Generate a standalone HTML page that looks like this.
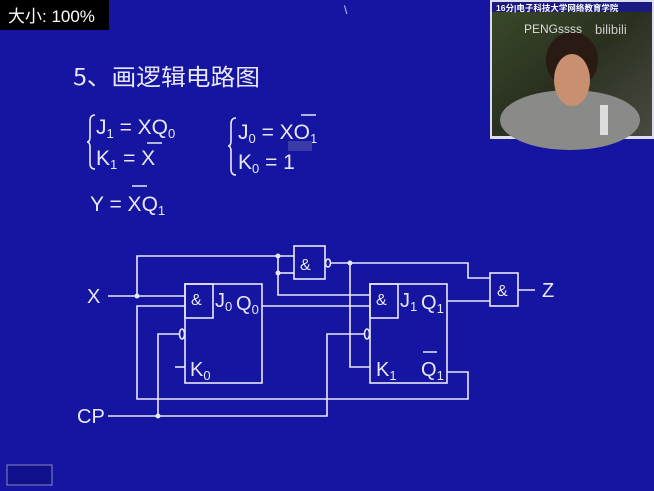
<!DOCTYPE html>
<html><head><meta charset="utf-8"><style>
html,body{margin:0;padding:0;width:654px;height:491px;overflow:hidden;background:#1414a0;}
svg{display:block}
</style></head><body>
<svg width="654" height="491" viewBox="0 0 654 491" xmlns="http://www.w3.org/2000/svg" font-family="Liberation Sans, Noto Sans CJK SC, sans-serif">
<rect width="654" height="491" fill="#1515a2"/>
<rect x="0" y="0" width="109" height="30" fill="#000"/>
<text x="8" y="22" font-size="17" fill="#fff">大小: 100%</text>
<text x="344" y="14" font-size="12" fill="#ccd">\</text>
<text x="73" y="85" font-size="23" fill="#e8e8f4" textLength="187" lengthAdjust="spacingAndGlyphs" font-family="Noto Sans CJK SC, sans-serif">5、画逻辑电路图</text>
<g fill="none" stroke="#e8e8f4" stroke-width="1.6">
<path d="M95,115 Q90,115 90,121 L90,137 Q90,142 87,142 Q90,142 90,147 L90,163 Q90,169 95,169"/>
<path d="M236,118 Q231,118 231,124 L231,141 Q231,146 228,146 Q231,146 231,151 L231,169 Q231,175 236,175"/>
</g>
<g fill="#e8e8f4" font-size="21">
<text x="96" y="134">J<tspan font-size="13" dy="4">1</tspan><tspan dy="-4"> = XQ</tspan><tspan font-size="13" dy="4">0</tspan></text>
<text x="96" y="165">K<tspan font-size="13" dy="4">1</tspan><tspan dy="-4"> = X</tspan></text>
<text x="238" y="139">J<tspan font-size="13" dy="4">0</tspan><tspan dy="-4"> = XO</tspan><tspan font-size="13" dy="4">1</tspan></text>
<text x="238" y="169">K<tspan font-size="13" dy="4">0</tspan><tspan dy="-4"> = 1</tspan></text>
<text x="90" y="211">Y = XQ<tspan font-size="13" dy="4">1</tspan></text>
</g>
<g stroke="#e8e8f4" stroke-width="1.5">
<line x1="147" y1="143" x2="162" y2="143"/>
<line x1="301" y1="115" x2="316" y2="115"/>
<line x1="132" y1="186" x2="147" y2="186"/>
</g>
<rect x="288" y="141" width="24" height="10" fill="#3a3aa8"/>
<g stroke="#e8e8f4" stroke-width="1.6" fill="none">
<polyline points="137,296 137,256 294,256"/>
<polyline points="278,256 278,295 370,295"/>
<line x1="278" y1="273" x2="294" y2="273"/>
<rect x="294" y="246" width="31" height="33"/>
<ellipse cx="328" cy="263" rx="2.5" ry="4"/>
<polyline points="331,263 468,263 468,278 490,278"/>
<polyline points="350,263 350,367 370,367"/>
<rect x="490" y="273" width="28" height="33"/>
<line x1="518" y1="290" x2="535" y2="290"/>
<line x1="108" y1="296" x2="185" y2="296"/>
<rect x="185" y="284" width="77" height="99"/>
<rect x="185" y="284" width="28" height="34"/>
<polyline points="185,306 137,306 137,399 468,399 468,372 447,372"/>
<line x1="262" y1="306" x2="370" y2="306"/>
<rect x="370" y="284" width="77" height="99"/>
<rect x="370" y="284" width="28" height="34"/>
<line x1="447" y1="301" x2="490" y2="301"/>
<ellipse cx="182" cy="334" rx="2.5" ry="5"/>
<polyline points="179,334 158,334 158,416"/>
<ellipse cx="367" cy="334" rx="2.5" ry="5"/>
<polyline points="108,416 327,416 327,334 364,334"/>
<line x1="175" y1="367" x2="185" y2="367"/>
</g>
<g fill="#e8e8f4">
<circle cx="137" cy="296" r="2.5"/><circle cx="278" cy="256" r="2.5"/><circle cx="278" cy="273" r="2.5"/>
<circle cx="350" cy="263" r="2.5"/><circle cx="158" cy="416" r="2.5"/>
</g>
<g fill="#e8e8f4" font-size="20">
<text x="87" y="303">X</text>
<text x="77" y="423">CP</text>
<text x="542" y="297">Z</text>
<text x="300" y="270" font-size="16">&amp;</text>
<text x="497" y="296" font-size="16">&amp;</text>
<text x="191" y="305" font-size="16">&amp;</text>
<text x="376" y="305" font-size="16">&amp;</text>
<text x="215" y="307">J<tspan font-size="13" dy="4">0</tspan></text>
<text x="236" y="310">Q<tspan font-size="13" dy="4">0</tspan></text>
<text x="190" y="376">K<tspan font-size="13" dy="4">0</tspan></text>
<text x="400" y="307">J<tspan font-size="13" dy="4">1</tspan></text>
<text x="421" y="309">Q<tspan font-size="13" dy="4">1</tspan></text>
<text x="376" y="376">K<tspan font-size="13" dy="4">1</tspan></text>
<text x="421" y="376">Q<tspan font-size="13" dy="4">1</tspan></text>
</g>
<line x1="423" y1="352" x2="437" y2="352" stroke="#e8e8f4" stroke-width="1.5"/>
<defs>
<linearGradient id="bg" x1="0" y1="0" x2="1" y2="1"><stop offset="0" stop-color="#3a4a2a"/><stop offset="0.5" stop-color="#2a3020"/><stop offset="1" stop-color="#4a4a40"/></linearGradient>
</defs>
<rect x="490" y="0" width="164" height="139" fill="#dde"/>
<rect x="492" y="2" width="160" height="134" fill="url(#bg)"/>
<rect x="492" y="2" width="160" height="10" fill="#1a1a80"/>
<text x="496" y="11" font-size="8.5" font-weight="bold" fill="#fff">16分|电子科技大学网络教育学院</text>
<ellipse cx="570" cy="120" rx="70" ry="30" fill="#8a8a88"/>
<ellipse cx="572" cy="60" rx="26" ry="28" fill="#2a1a14"/>
<ellipse cx="572" cy="80" rx="18" ry="26" fill="#c89070"/>
<rect x="600" y="105" width="8" height="30" fill="#ddd"/>
<text x="524" y="33" font-size="12" fill="#ddd">PENGssss</text>
<text x="595" y="34" font-size="13" fill="#ccc">bilibili</text>
<rect x="7" y="465" width="45" height="20" fill="#10108a" stroke="#8888c0" stroke-width="1"/>
</svg>
</body></html>
